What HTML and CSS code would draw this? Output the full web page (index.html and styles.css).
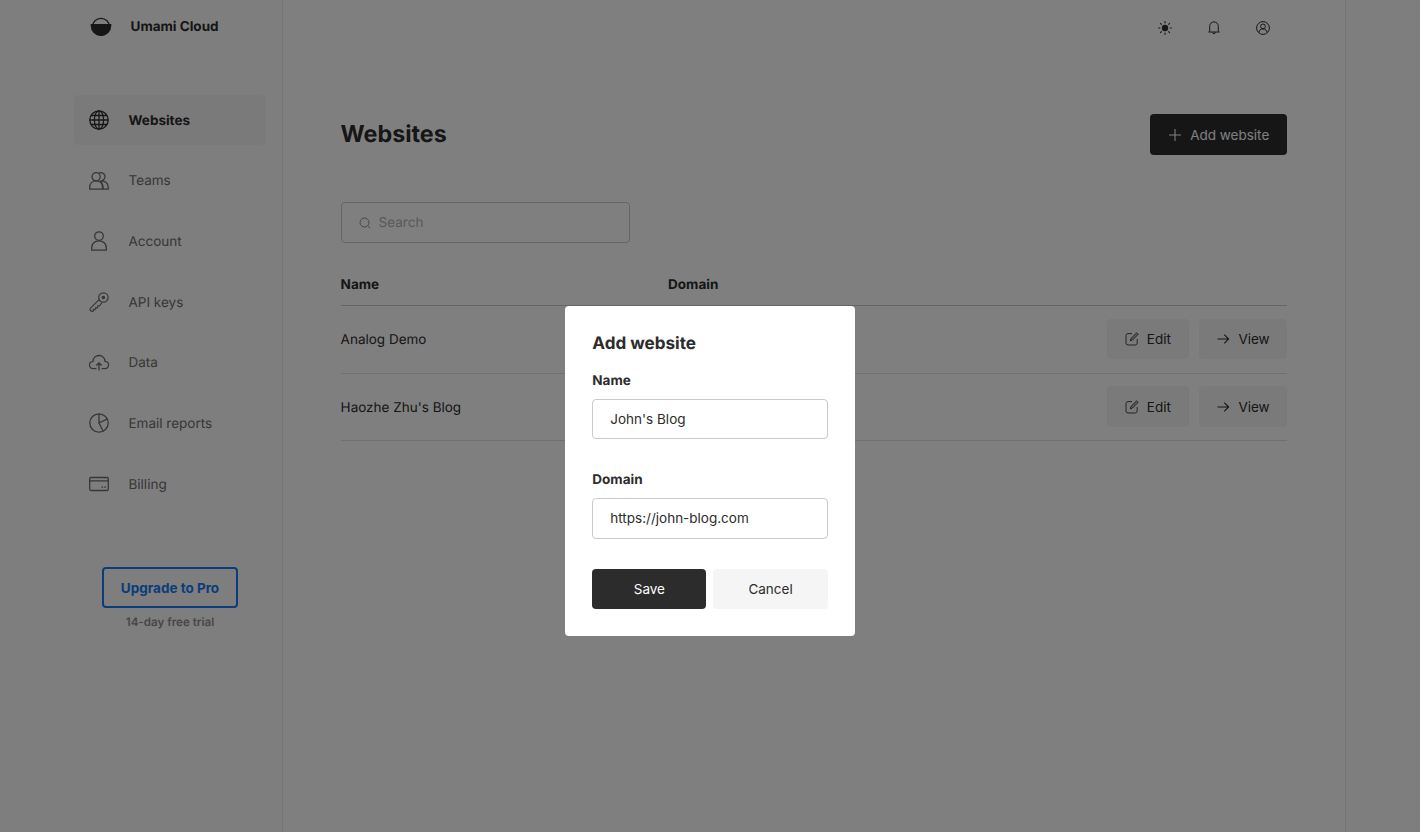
FILE: index.html
```html
<!DOCTYPE html>
<html lang="en">
<head>
<meta charset="utf-8">
<title>Umami Cloud</title>
<link rel="stylesheet" href="styles.css">
</head>
<body>
<svg class="sprite" xmlns="http://www.w3.org/2000/svg">
  <symbol id="edit" viewBox="0 0 14 14"><path d="M7 1.600H3A2 2 0 0 0 1 3.600V11a2 2 0 0 0 2 2h7.200a2 2 0 0 0 2-2V7"/><path d="M5.300 8.900l.7-2.500L11.700.8l1.500 1.500L7.600 8z" fill="currentColor" fill-opacity=".35"/></symbol>
  <symbol id="arrow" viewBox="0 0 14 14"><path d="M1.500 7h11M8.300 2.700L12.600 7l-4.300 4.300"/></symbol>
</svg>
<div class="app">
  <aside class="sidebar">
    <div class="brand">
      <svg class="logo" viewBox="0 0 22 20"><circle cx="11" cy="9.800" r="8.500" fill="none" stroke="currentColor" stroke-width="1.200"/><path d="M.7 7h20.600v1.700a10.300 10.300 0 0 1-20.600 0z" fill="currentColor"/></svg>
      <span>Umami Cloud</span>
    </div>
    <nav class="nav">
      <a class="nav-item active"><svg class="icon" viewBox="0 0 20 20"><circle cx="10" cy="10" r="9.200"/><ellipse cx="10" cy="10" rx="4.600" ry="9.200"/><path d="M10 .7v18.600M.7 10h18.600M2 5.500h16M2 14.500h16"/></svg><span>Websites</span></a>
      <a class="nav-item"><svg class="icon" viewBox="0 0 20 20"><circle cx="7.100" cy="5.800" r="4.100"/><path d="M.7 18.100h12.800v-1.700c0-4-2.700-6.500-6.400-6.500S.7 12.400.7 16.400z"/><path d="M9.500 2.400a4.100 4.100 0 1 1 2.700 7.400c3.900 0 7.100 2.500 7.100 6.600v1.700h-5.800M10.600 9.900c2.300 1.200 3.600 3.800 3.600 8.200"/></svg><span>Teams</span></a>
      <a class="nav-item"><svg class="icon" viewBox="0 0 20 20"><circle cx="10" cy="5.100" r="4.300"/><path d="M2.700 19.200h14.600v-2.300c0-4.200-3-7.100-7.300-7.100s-7.300 2.900-7.300 7.100z"/></svg><span>Account</span></a>
      <a class="nav-item"><svg class="icon thin" viewBox="0 0 20 20"><circle cx="14.400" cy="5.500" r="4.700"/><circle cx="14.400" cy="5.500" r="1.200" fill="currentColor"/><path d="M10.100 7.600L1.200 16.400l-.1 1.800 1.700 1.200 1.400-.2.200-1.700 1.700.2.600-2 1.700.3.400-2.100 1.500.1 2.600-3.300"/></svg><span>API keys</span></a>
      <a class="nav-item"><svg class="icon" viewBox="0 0 20 20"><path d="M7.400 15.700H4.300A3.700 3.700 0 0 1 4 8.300C4 4.900 6.700 2.500 10 2.500s6 2.400 6 5.800a3.700 3.700 0 0 1-.3 7.400h-3.100M10 17.600V9.900M7.300 12.500L10 9.800l2.700 2.700"/></svg><span>Data</span></a>
      <a class="nav-item"><svg class="icon" viewBox="0 0 20 20"><circle cx="10" cy="10" r="9.200"/><path d="M10 .7V10l8.400-4.100M10 10l4.200 8.300"/></svg><span>Email reports</span></a>
      <a class="nav-item"><svg class="icon" viewBox="0 0 20 20"><rect x=".7" y="3.500" width="18.600" height="13" rx="1.300"/><path d="M.7 6.800h18.600M12.500 13.200h1.600M15.200 13.200h1.600"/></svg><span>Billing</span></a>
    </nav>
    <div class="upgrade">
      <button class="upgrade-button">Upgrade to Pro</button>
      <span class="trial">14-day free trial</span>
    </div>
  </aside>
  <main class="main">
    <header class="topbar">
      <svg class="top-icon" viewBox="0 0 14 14"><circle cx="7" cy="7" r="3.200" fill="currentColor" stroke="none"/><path d="M7 .3v1.900M7 11.800v1.900M.3 7h1.900M11.800 7h1.900M2.200 2.200l1.400 1.400M10.400 10.400l1.400 1.400M2.200 11.800l1.400-1.400M10.400 3.600l1.400-1.400" stroke-width="1.200"/></svg>
      <svg class="top-icon" viewBox="0 0 14 14"><path d="M2.700 10.700V5.400C2.700 2.700 4.500.9 7 .9s4.300 1.800 4.300 4.500v5.300M1.400 11h11.200M5.500 11.300c.1 1.900 2.900 1.900 3 0"/></svg>
      <svg class="top-icon" viewBox="0 0 14 14"><circle cx="7" cy="7" r="6.400"/><circle cx="7" cy="5.400" r="2.400"/><path d="M2.800 11.600C3.200 9.200 4.800 7.900 7 7.900s3.800 1.300 4.200 3.700"/></svg>
    </header>
    <div class="page-head">
      <h1>Websites</h1>
      <button class="btn dark"><svg class="btn-icon" viewBox="0 0 14 14"><path d="M7 1v12M1 7h12"/></svg>Add website</button>
    </div>
    <label class="search"><svg class="search-icon" viewBox="0 0 12 12"><circle cx="5.500" cy="5.500" r="4.500"/><path d="M8.800 8.800l2.400 2.400"/></svg><span>Search</span></label>
    <div class="table">
      <div class="row head"><span>Name</span><span>Domain</span><span></span></div>
      <div class="row"><span>Analog Demo</span><span></span>
        <div class="actions"><button class="btn edit"><svg class="btn-icon"><use href="#edit"/></svg>Edit</button><button class="btn view"><svg class="btn-icon"><use href="#arrow"/></svg>View</button></div>
      </div>
      <div class="row"><span>Haozhe Zhu's Blog</span><span></span>
        <div class="actions"><button class="btn edit"><svg class="btn-icon"><use href="#edit"/></svg>Edit</button><button class="btn view"><svg class="btn-icon"><use href="#arrow"/></svg>View</button></div>
      </div>
    </div>
  </main>
</div>
<div class="overlay">
  <form class="modal">
    <h2>Add website</h2>
    <label class="field"><span>Name</span><input type="text" value="John's Blog"></label>
    <label class="field"><span>Domain</span><input type="text" value="https://john-blog.com"></label>
    <div class="modal-actions"><button class="btn dark" type="button">Save</button><button class="btn" type="button">Cancel</button></div>
  </form>
</div>
</body>
</html>
```
FILE: styles.css
```css
* { box-sizing: border-box; }
body {
  margin: 0;
  height: 832px;
  overflow: hidden;
  background: #fcfcfc;
  color: #2c2c2c;
  font: 13.5px/20px Inter, sans-serif;
  text-rendering: geometricPrecision;
}
svg { fill: none; stroke: currentColor; flex: none; }
h1, h2 { margin: 0; font-weight: 700; }
button, input { font: inherit; color: inherit; }
.sprite { display: none; }
.app { display: flex; height: 832px; padding-left: 74px; }

.sidebar { width: 208.6px; border-right: 1px solid #eaeaea; display: flex; flex-direction: column; }
.brand { display: flex; align-items: center; height: 20px; margin: 17px 0 58px 16px; gap: 18.5px; font-weight: 700; }
.logo { width: 22px; height: 20px; stroke: none; }
.nav { display: flex; flex-direction: column; gap: 10.7px; width: 192px; }
.nav-item { display: flex; align-items: center; height: 50px; padding-left: 15px; gap: 19.5px; border-radius: 4px; color: #6e6e6e; }
.nav-item span { padding-top: 1.2px; }
.nav-item.active { background: #f5f5f5; color: #2c2c2c; font-weight: 700; }
.icon { width: 20px; height: 20px; stroke-width: 1.3; }
.icon.thin { stroke-width: 1.2; }
.upgrade { display: flex; flex-direction: column; align-items: center; width: 136px; margin: 58px 0 0 28px; }
.upgrade-button { width: 136px; height: 40.5px; padding: 1px 0 0; background: transparent; border: 2px solid #147af3; border-radius: 4px; color: #147af3; font-weight: 700; }
.trial { margin-top: 4.5px; font-size: 11.6px; font-weight: 600; color: #8e8e8e; }

.main { width: 1063.4px; padding: 0 57.6px 0 58px; background: #fff; border-right: 1px solid #eaeaea; }
.topbar { display: flex; justify-content: flex-end; align-items: center; gap: 35px; height: 55px; padding-right: 17.5px; }
.top-icon { width: 14px; height: 14px; }
.page-head { display: flex; justify-content: space-between; align-items: center; height: 40.5px; margin-top: 59.2px; }
h1 { font-size: 23.3px; line-height: 30px; }
.btn { display: flex; align-items: center; justify-content: center; gap: 8px; height: 40.4px; padding: 0; border: 0; border-radius: 4px; background: #f5f5f5; }
.btn.dark { background: #2c2c2c; color: #fff; }
.btn-icon { width: 14px; height: 14px; stroke-width: 1.1; }
.edit .btn-icon { stroke-width: 1; opacity: .85; }
.page-head .btn { width: 137.4px; padding-top: 1px; }
.search { display: flex; align-items: center; gap: 8px; width: 289.4px; height: 40.5px; margin-top: 47.5px; padding: 0.5px 0 0 17px; border: 1px solid #cacaca; border-radius: 4px; color: #b3b3b3; }
.search-icon { width: 12px; height: 12px; color: #8e8e8e; }

.table { margin-top: 31px; }
.row { display: grid; grid-template-columns: 327.5px 1fr auto; align-items: center; height: 67.5px; border-bottom: 1px solid #e1e1e1; }
.row > span { padding-top: 1.9px; }
.row.head { height: 32.6px; align-items: start; border-color: #cacaca; font-weight: 700; }
.row.head > span { padding-top: 1.6px; }
.actions { display: flex; gap: 9.5px; padding-bottom: 1px; }
.edit { width: 82.6px; }
.view { width: 88.7px; }

.overlay { position: absolute; inset: 0; background: rgba(0, 0, 0, .5); }
.modal { width: 289.3px; height: 330.8px; margin: 305.6px 0 0 565.3px; padding: 27px; border-radius: 4px; background: #fff; }
h2 { font-size: 17.1px; line-height: 22px; }
.field { display: flex; flex-direction: column; gap: 8.3px; font-weight: 700; margin-top: 16px; }
.field + .field { margin-top: 30.7px; }
.field input { width: 100%; height: 40.4px; padding: 0 17px 1px; border: 1px solid #cacaca; border-radius: 4px; background: #fff; font-weight: 400; }
.modal-actions { display: grid; grid-template-columns: 1fr 1fr; gap: 7px; margin-top: 30px; }
```
